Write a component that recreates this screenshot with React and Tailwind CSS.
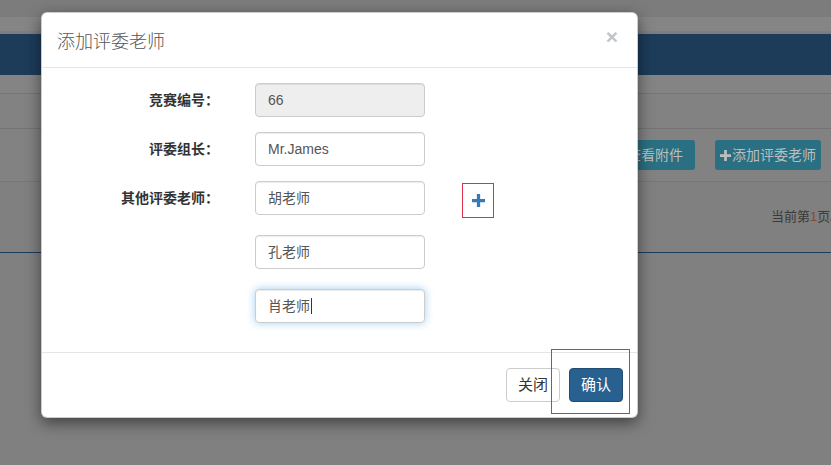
import React from 'react'

const font = { fontFamily: '"Helvetica Neue", "Liberation Sans", "Noto Sans CJK SC", sans-serif' }

const PlusIcon = ({ className }) => (
  <svg className={className} viewBox="0 0 12 12" fill="currentColor">
    <path d="M4.5 0h3v4.5H12v3H7.5V12h-3V7.5H0v-3h4.5z" />
  </svg>
)

const Field = ({ label, value, disabled, focused, className = '' }) => (
  <div className={`flex items-center ${className}`}>
    <label className="w-[177px] text-right text-[14px] font-bold text-[#333]">{label}</label>
    {value !== undefined && (
      <div
        className={`ml-[36px] w-[170px] h-[34px] px-3 flex items-center rounded-[4px] border text-[14px] text-[#555] ${
          disabled ? 'bg-[#eee] border-[#ccc]' : 'bg-white border-[#ccc]'
        } ${focused ? 'border-[#66afe9] shadow-[inset_0_1px_1px_rgba(0,0,0,.075),0_0_8px_rgba(102,175,233,.6)]' : 'shadow-[inset_0_1px_1px_rgba(0,0,0,.075)]'}`}
      >
        {value}
        {focused && <span className="inline-block w-px h-[16px] bg-[#333] ml-px" />}
      </div>
    )}
  </div>
)

export default function App() {
  return (
    <div className="relative w-[831px] h-[465px] overflow-hidden bg-[#808080]" style={font}>
      {/* page behind the backdrop */}
      <div className="h-[17px] bg-[#7c7c7c]" />
      <div className="h-[17px] bg-[#858585] border-b-[3px] border-[#7e7e7e]" />
      <div className="h-[41px] bg-[#1c3c5a]" />
      <div className="h-[19px] bg-[#848484] border-b border-[#767676]" />
      <div className="h-[35px] bg-[#828282] border-b border-[#747474]" />
      <div className="h-[53px] bg-[#828282] border-b border-[#767676] flex items-center justify-end pr-[10px] gap-[20px]">
        <div className="h-[30px] w-[80px] rounded-[3px] bg-[#2a7082] text-[#bdbdbd] text-[14px] flex items-center justify-center">
          查看附件
        </div>
        <div className="h-[30px] w-[106px] rounded-[3px] bg-[#2a7082] text-[#bdbdbd] text-[14px] flex items-center justify-center">
          <PlusIcon className="w-[11px] h-[11px] mr-[1px]" />
          添加评委老师
        </div>
      </div>
      <div className="h-[71px] bg-[#808080] border-b border-[#1c3c5a] flex items-center pl-[771px]">
        <span className="text-[13px] text-[#3a3a3a] whitespace-nowrap">
          当前第<span className="text-[#8a4a2a]">1</span>页/
        </span>
      </div>

      {/* modal */}
      <div className="absolute left-[41px] top-[12px] w-[597px] h-[406px] bg-white rounded-[6px] border border-black/20 shadow-[0_5px_15px_rgba(0,0,0,.5)] flex flex-col">
        <div className="h-[55px] px-[15px] flex items-center justify-between border-b border-[#e5e5e5]">
          <h4 className="text-[18px] text-[#555] font-light" style={{ fontFamily: '"Noto Sans CJK SC", serif' }}>
            添加评委老师
          </h4>
          <span className="text-[21px] font-bold leading-none text-[#c4c4c4] mr-[4px] -mt-[8px]">×</span>
        </div>

        <div className="flex-1 pt-[15px]">
          <Field label="竞赛编号：" value="66" disabled />
          <Field label="评委组长：" value="Mr.James" className="mt-[15px]" />
          <div className="flex items-start mt-[15px]">
            <Field label="其他评委老师：" value="胡老师" />
            <div className="ml-[37px] mt-[2px] w-[32px] h-[35px] border border-[#e0304a] flex items-center justify-center">
              <PlusIcon className="w-[13px] h-[13px] text-[#337ab7]" />
            </div>
          </div>
          <Field label="" value="孔老师" className="mt-[17px]" />
          <Field label="" value="肖老师" focused className="mt-[20px]" />
        </div>

        <div className="h-[65px] border-t border-[#e5e5e5] flex items-center justify-end px-[14px] gap-[9px]">
          <div className="h-[34px] w-[54px] rounded-[4px] border border-[#ccc] bg-white text-[15px] text-[#333] flex items-center justify-center">
            关闭
          </div>
          <div className="h-[34px] w-[54px] rounded-[4px] bg-[#286090] border border-[#204d74] text-[15px] text-white flex items-center justify-center">
            确认
          </div>
        </div>
      </div>

      {/* red annotation box */}
      <div className="absolute left-[551px] top-[349px] w-[79px] h-[65px] border border-[#e0304a]" />
    </div>
  )
}
